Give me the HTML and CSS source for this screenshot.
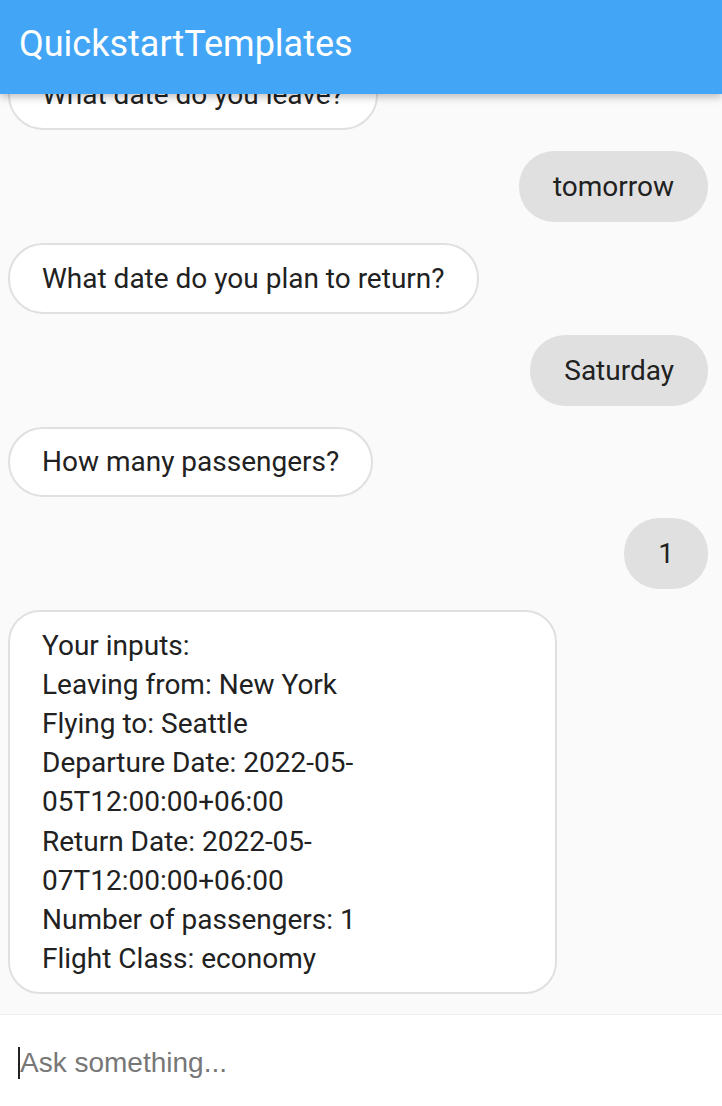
FILE: index.html
```html
<!DOCTYPE html>
<html lang="en">
<head>
    <meta charset="UTF-8">
    <meta name="viewport" content="width=device-width, initial-scale=1.0">
    <title>QuickstartTemplates</title>
    <link rel="stylesheet" href="styles.css">
</head>
<body>

<div class="app">
    <header class="app-bar">QuickstartTemplates</header>

    <div class="messages">
        <div class="bubble bot">What date do you leave?</div>
        <div class="bubble user">tomorrow</div>
        <div class="bubble bot">What date do you plan to return?</div>
        <div class="bubble user">Saturday</div>
        <div class="bubble bot">How many passengers?</div>
        <div class="bubble user">1</div>
        <div class="bubble bot summary">Your inputs:<br>Leaving from: New York<br>Flying to: Seattle<br>Departure Date: 2022-05-05T12:00:00+06:00<br>Return Date: 2022-05-07T12:00:00+06:00<br>Number of passengers: 1<br>Flight Class: economy</div>
    </div>

    <div class="composer">
        <input type="text" id="question" placeholder="Ask something...">
    </div>
</div>

</body>
</html>
```

FILE: styles.css
```css
html, body {
    margin: 0;
    height: 100%;
}

body {
    font-family: Roboto, "Noto Sans", Arial, sans-serif;
    background-color: #fafafa;
    color: #212121;
}

.app {
    display: flex;
    flex-direction: column;
    height: 1106px;
    overflow: hidden;
}

.app-bar {
    position: relative;
    z-index: 1;
    flex: 0 0 94px;
    display: flex;
    align-items: center;
    padding: 0 19px 6px;
    box-sizing: border-box;
    background-color: #42a5f5;
    color: #ffffff;
    font-size: 36px;
    box-shadow: 0px 3px 8px rgba(0, 0, 0, 0.25);
}

.messages {
    flex: 1;
    display: flex;
    flex-direction: column;
    justify-content: flex-end;
    align-items: flex-start;
    gap: 21px;
    padding: 0 14px 20px 8px;
    overflow: hidden;
}

.bubble {
    font-size: 28px;
    line-height: 39.2px;
    border-radius: 35px;
    max-width: 549px;
    box-sizing: border-box;
    flex-shrink: 0;
}

.bot {
    background-color: #ffffff;
    border: 2px solid #e0e0e0;
    padding: 13.5px 32px;
}

.user {
    align-self: flex-end;
    background-color: #e0e0e0;
    padding: 16px 34px;
}

.summary {
    border-radius: 32px;
}

.composer {
    flex: 0 0 92px;
    display: flex;
    align-items: center;
    border-top: 1px solid #eeeeee;
    background-color: #ffffff;
    padding: 4px 18px 0;
    box-sizing: border-box;
}

#question {
    width: 100%;
    height: 32px;
    border: none;
    border-left: 2px solid #222222;
    outline: none;
    padding: 0;
    font-family: "Liberation Sans", Arial, sans-serif;
    font-size: 28px;
    line-height: 32px;
    color: #212121;
    background: transparent;
}

#question::placeholder {
    color: #777777;
}
```
